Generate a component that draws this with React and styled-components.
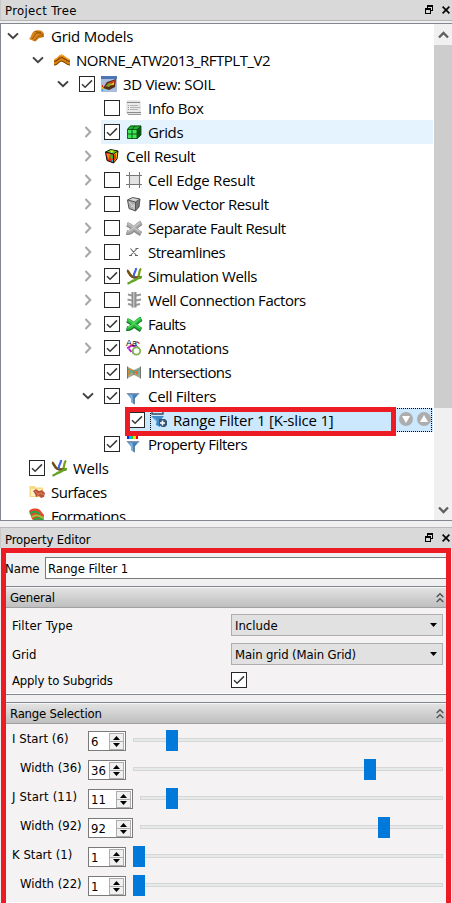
import React from 'react';
import styled, { createGlobalStyle, css } from 'styled-components';

const Global = createGlobalStyle`
  *, *::before, *::after { box-sizing: border-box; }
  body { margin: 0; background: #f0f0f0; }
`;

const Window = styled.main`
  width: 452px;
  height: 903px;
  overflow: hidden;
  display: flex;
  flex-direction: column;
  background: #f0f0f0;
  color: #000;
  font: 13px "DejaVu Sans Condensed", "DejaVu Sans", sans-serif;
  font-stretch: 75%;
`;

const Text = styled.span`
  white-space: pre;
  letter-spacing: ${(p) => p.$track || 0}px;
`;

/* ---------- dock title bars ---------- */

const DockTitle = styled.header`
  flex: none;
  height: 21px;
  display: flex;
  align-items: center;
  justify-content: space-between;
  padding: 0 2px 0 4px;
  background: #d9d9d9;
  border-left: 1px solid #c8c8c8;
  border-bottom: ${(p) => (p.$lower ? 0 : '1px solid #b4b4b4')};
  border-top: ${(p) => (p.$lower ? '1px solid #b9b9b9' : 0)};
`;

const DockLabel = styled(Text)`
  padding-top: ${(p) => (p.$lower ? 2 : 0)}px;
`;

const DockButtons = styled.div`
  display: flex;
  align-items: center;
  gap: 9px;
  margin-top: -1px;
`;

/* ---------- tree ---------- */

const TreeFrame = styled.section`
  flex: none;
  margin-top: 2px;
  height: 498px;
  display: flex;
  border: 1px solid #828790;
  border-right: 0;
  background: #fff;
`;

const TreeList = styled.div`
  width: 432px;
  overflow: hidden;
`;

const TreeRow = styled.div`
  height: 24px;
  display: flex;
  padding-left: ${(p) => Math.max(0, p.$level * 25 - 1)}px;
`;

const Expander = styled.div`
  flex: none;
  width: ${(p) => (p.$level === 0 ? 25 : 26)}px;
  height: 24px;
  padding-right: ${(p) => (p.$level === 0 ? 2 : 1)}px;
  display: flex;
  align-items: center;
  justify-content: center;
`;

const RowContent = styled.div`
  position: relative;
  flex: 1;
  display: flex;
  align-items: center;
  gap: 6px;
  padding: 0 2px 0 3px;
  ${(p) => p.$state === 'hover' && css`background: #e5f3ff;`}
  ${(p) => p.$state === 'selected' && css`background: #cce8ff;`}
`;

const RowLabel = styled(Text)`
  font: 15px/24px "Open Sans", "Noto Sans", sans-serif;
`;

const IconSlot = styled.svg`
  flex: none;
  width: 16px;
  height: 16px;
  overflow: visible;
`;

const Box = styled.span`
  flex: none;
  width: 16px;
  height: 16px;
  display: flex;
  align-items: center;
  justify-content: center;
  border: 1px solid #262626;
  background: #fff;
`;

const FocusOutline = styled.div`
  position: absolute;
  inset: 0 1px 0 24px;
  border: 1px dotted #000;
`;

const RowHighlight = styled.div`
  position: absolute;
  left: -1px;
  top: -1px;
  width: 271px;
  height: 29px;
  border: 5px solid #ed1c24;
  z-index: 1;
`;

const MoveButtons = styled.div`
  margin-left: auto;
  display: flex;
  gap: 4px;
  margin-top: -2px;
`;

const ScrollBar = styled.div`
  margin-left: 1px;
  width: 18px;
  display: flex;
  flex-direction: column;
  background: #f0f0f0;
`;

const ScrollButton = styled.div`
  height: 21px;
  display: flex;
  align-items: center;
  justify-content: center;
  padding-left: 1px;
`;

const ScrollThumb = styled.div`
  height: 363px;
  background: #cdcdcd;
`;

const ScrollTrack = styled.div`
  flex: 1;
`;

/* ---------- property editor ---------- */

const Editor = styled.section`
  position: relative;
  flex: none;
  margin-top: 6px;
  height: 376px;
`;

const EditorFrame = styled.div`
  position: absolute;
  left: 1px;
  top: 21px;
  width: 450px;
  height: 370px;
  border: 5px solid #ed1c24;
`;

const NameRow = styled.div`
  display: flex;
  align-items: center;
  margin-top: 9px;
  padding: 0 5px;
`;

const NameLabel = styled(Text)`
  width: 40px;
`;

const NameInput = styled.div`
  flex: 1;
  height: 22px;
  padding-left: 2px;
  border: 1px solid #7a7a7a;
  background: #fff;
  line-height: 21px;
`;

const Group = styled.div`
  margin: 7px 6px 0 6px;
  height: ${(p) => p.$height}px;
  border-top: 1px solid #828790;
  border-bottom: 1px solid #828790;
  background: #f4f2f3;
  box-shadow: inset 0 -1px #fff;
`;

const GroupHeader = styled.div`
  height: 21px;
  display: flex;
  align-items: center;
  justify-content: space-between;
  padding: 0 2px 0 4px;
  border-top: 1px solid #f4f4f4;
  border-bottom: 1px solid #a0a0a0;
  background: linear-gradient(#e2e2e2, #bfbfbf);
`;

const Field = styled.div`
  display: grid;
  grid-template-columns: 219px 212px;
  align-items: center;
  padding-left: 6px;
  height: ${(p) => p.$height}px;
`;

const FieldGrid = styled.div`
  padding-top: 3px;
`;

const Combo = styled.div`
  height: 22px;
  margin-bottom: 1px;
  display: flex;
  align-items: center;
  justify-content: space-between;
  padding: 0 5px 0 3px;
  border: 1px solid #adadad;
  background: #e1e1e1;
`;

const RangeList = styled.div`
  padding-top: 2px;
`;

const RangeRow = styled.div`
  display: flex;
  align-items: center;
  height: 29px;
  padding: 1px 3px 0 6px;
`;

const RangeLabel = styled(Text)`
  width: 76px;
  padding-left: ${(p) => (p.$inset ? 8 : 0)}px;
  margin-top: -5px;
`;

const Spin = styled.div`
  flex: none;
  width: ${(p) => (p.$wide ? 45 : 38)}px;
  height: 20px;
  display: flex;
  justify-content: space-between;
  padding: 1px 1px 1px 2px;
  border: 1px solid #7a7a7a;
  background: #fff;
  line-height: 18px;
`;

const SpinArrows = styled.div`
  width: 15px;
  height: 17px;
  display: grid;
  grid-template-rows: 1fr 1fr;
  place-items: center;
  border: 1px solid #adadad;
  background: linear-gradient(#adadad, #adadad) center / 100% 1px no-repeat #f0f0f0;
`;

const Slider = styled.div`
  flex: 1;
  margin: -1px 0 0 7px;
  height: 21px;
  padding-top: 8px;
`;

const Groove = styled.div`
  position: relative;
  width: 100%;
  height: 4px;
  border: 1px solid #d6d6d6;
  background: #e7eaea;
`;

const Handle = styled.div`
  position: absolute;
  top: -9px;
  left: ${(p) => p.$at - 1}px;
  width: 12px;
  height: 21px;
  background: #0079da;
`;

/* ---------- small drawings ---------- */

const Check = ({ on }) => (
  <Box>
    {on && (
      <svg width="14" height="14" viewBox="0 0 14 14">
        <path d="M2 7.2 5.1 10.3 12 3.4" fill="none" stroke="#3a3a3a" strokeWidth="1.5" />
      </svg>
    )}
  </Box>
);

const RestoreIcon = () => (
  <svg width="8" height="9" viewBox="0 0 8 9" shapeRendering="crispEdges">
    <path d="M2 0h6v6H6v3H0V3h2zM3 2v1h3v2h1V2zM1 5v3h4V5z" fill="#000" fillRule="evenodd" />
  </svg>
);
const CloseIcon = () => (
  <svg width="8" height="8" viewBox="0 0 8 8">
    <path d="M.6.6l6.8 6.8M7.4.6.6 7.4" stroke="#000" strokeWidth="1.6" />
  </svg>
);
const DownChevron = () => (
  <svg width="12" height="8" viewBox="0 0 12 8">
    <path d="M1 1.4 6 6.2 11 1.4" fill="none" stroke="#404040" strokeWidth="2" />
  </svg>
);
const RightChevron = () => (
  <svg width="8" height="12" viewBox="0 0 8 12">
    <path d="M1.5 1 6.3 6 1.5 11" fill="none" stroke="#a6a6a6" strokeWidth="2" />
  </svg>
);
const ScrollChevron = ({ up }) => (
  <svg width="11" height="8" viewBox="0 0 11 8">
    <path d={up ? 'M1 6.5 5.5 2 10 6.5' : 'M1 1.5 5.5 6 10 1.5'} fill="none" stroke="#606060" strokeWidth="2.3" />
  </svg>
);
const CollapseIcon = () => (
  <svg width="8" height="12" viewBox="0 0 8 12">
    <path d="M.7 5 4 1.7 7.3 5M.7 10 4 6.7 7.3 10" fill="none" stroke="#555" strokeWidth="1.5" />
  </svg>
);
const Caret = ({ up }) => (
  <svg width="7" height="4" viewBox="0 0 7 4">
    <path d={up ? 'M0 4 3.5 0 7 4z' : 'M0 0h7L3.5 4z'} fill="#000" />
  </svg>
);
const MoveIcon = ({ up }) => (
  <svg width="14" height="14" viewBox="0 0 14 14">
    <circle cx="7" cy="7" r="7" fill="#adadad" />
    <path d={up ? 'M7 3 11 10H3z' : 'M3 4h8L7 11z'} fill="#fff" />
  </svg>
);

const funnel = (
  <g transform="translate(-1 2)">
    <path d="M1.500 3h13L9.800 8.500v6L6 12V8.500z" fill="#3f7fc1" />
    <path d="M1.500 3h13l-1.200 1.600H2.800z" fill="#8496ab" />
    <path d="M6 8.500 3.500 5h4l.8 8.500L6 12z" fill="#79b1e0" />
    <path d="M8.300 8.500h1.500v6l-1.500-1z" fill="#6b7c93" />
  </g>
);

const wells = (
  <g fill="none">
    <path d="M15 .5C12.500 3 14 6 12 9" stroke="#7aa01a" strokeWidth="2.200" />
    <path d="M1 2.500C3 3 3 7 6 8.500S10 9.500 15 9.500" stroke="#72520f" strokeWidth="2.600" />
    <path d="M10 0C10.500 3.500 7 4.500 8 9" stroke="#4063e8" strokeWidth="2.200" />
    <path d="M16 9C12 9 11 12 8 12.500S5 15 1.500 15.500" stroke="#61a523" strokeWidth="2.300" />
  </g>
);

const faults = (light, mid, dark) => (
  <g fill="none">
    <path d="M.5 12.500C6 14 9 6 15.500 3M1 4.500C6 6 9 11 15 14" stroke={dark} strokeWidth="4.600" />
    <path d="M1 12C6 13 9 5 15 2.500M1.300 4C6 5.500 9 10 15 13" stroke={mid} strokeWidth="3.600" />
    <path d="M2 11C6 11 9 5 14 2.500M2 3.500C6 5.500 9 9 14 11.500" stroke={light} strokeWidth="1.100" />
  </g>
);

const cube = (top, left, right, line) => (
  <>
    <path d="M1.500 4 6.500 1.500 14 3 9.500 6z" fill={top} />
    <path d="M1.500 4 9.500 6v9L3 12.500z" fill={left} />
    <path d="M9.500 6 14 3l-1 8-3.500 4z" fill={right} />
    <path d="M1.500 4 6.500 1.500 14 3l-1 8-3.500 4L3 12.500zL9.500 6 14 3M9.500 6v9" fill="none" stroke={line} strokeLinejoin="round" />
  </>
);

const icons = {
  models: (
    <>
      <path d="M0 11C3 9 2 3 7 2.500s6 0 8 3V9l-4 1c-2 0-3 3-5 3.500z" fill="#d98318" />
      <path d="M3 11C6 9 5 5.500 8 5s4 1 6 2M5 12.500c3-1 3-4 5-4.500s3 0 4.500 .5M6 3.500l6 1" fill="none" stroke="#8f5208" strokeWidth=".9" />
    </>
  ),
  layers: (
    <>
      <path d="M0 7C4 7 4 2.500 7.500 2.500S12 7 16 7v6.500c-4 0-5-4-8.500-4S4 13.500 0 13.500z" fill="#dd830f" />
      <path d="M0 9.500C4 9.500 4.500 5.500 7.500 5.500S12 9.500 16 9.500M0 13c4 0 5-4 7.500-4s4.500 4 8.500 4" fill="none" stroke="#804706" strokeWidth="1.200" />
      <path d="M0 7.700C4 7.700 4 3.200 7.500 3.200S12 7.700 16 7.700" fill="none" stroke="#ffad31" />
    </>
  ),
  view: (
    <>
      <path d="M0 0h16v16H0z" fill="#a9bddd" />
      <path d="M0 0h16v3H0z" fill="#4d75b3" />
      <path d="M2 12 6 6l9-3-1 8-6 3z" fill="#503018" />
      <path d="M4 11 7 7l7-3-1 5z" fill="#d5361b" />
      <path d="M5 10l3-3 3 1-3 3z" fill="#78ac24" />
      <path d="M9 9l4-3v3z" fill="#e8bd22" />
      <path d="M1.500 9v2" stroke="#e52020" />
      <path d="M1.500 11v2" stroke="#e9d318" />
      <path d="M1.500 13v2" stroke="#2ba7d6" />
    </>
  ),
  info: (
    <>
      <path d="M1 1h13v13H1z" fill="#ececec" stroke="#d8d8d8" />
      <path d="M1 2.500h13M1 12.500h14" stroke="#8c8c8c" />
      <path d="M4 5.500h8M4 7.500h10M4 9.500h8" stroke="#b2b2b2" />
      <path d="M2 5.500h1M2 7.500h1M2 9.500h1M2 14.500h13" stroke="#999" />
    </>
  ),
  grids: (
    <>
      <path d="M1 5 4.500 1.500h10.500L11 5z" fill="#22b535" />
      <path d="M1 5h10v10H1z" fill="#3fe656" />
      <path d="M11 5l4-3.500V11l-4 4z" fill="#116c1b" />
      <path d="M1.500 5.500h9.500v9H1.500zM6 5.500v9M1.500 10H11L15 7M6 5.500 9 2M11 5.500 15 2v9l-4 3.500M13 4v9M1.500 5.500 4.500 2H15" fill="none" stroke="#06400d" strokeWidth=".8" />
    </>
  ),
  cell: (
    <>
      {cube('#55cf29', '#ed251d', '#ffca00', '#111')}
      <path d="M2.500 5.500 6 6l-1.500 6z" fill="#ff8a00" />
      <path d="M6 2.500h4L7.500 5z" fill="#ffe900" />
      <path d="M6 6.500l3 .7v3L7 12z" fill="#34bb25" />
      <path d="M10 7l2-1.500V11l-2 2z" fill="#f03b00" />
      <path d="M7.500 12.500l1.500-1v2.800z" fill="#1ac5e5" />
    </>
  ),
  edge: (
    <>
      <path d="M4 4h9v9H4z" fill="#e3e3e3" />
      <path d="M3.500 0v16M13.500 0v16M0 3.500h16M0 12.500h16" stroke="#777" strokeWidth="1.100" />
    </>
  ),
  flow: (
    <>
      {cube('#cfcfcf', '#aaa', '#777', '#555')}
      <path d="M3 6l4 4-2 1M6 3l4 1M8 8v5" fill="none" stroke="#ddd" />
    </>
  ),
  separate: faults('#c9c9c9', '#a9a9a9', '#8b8b8b'),
  stream: <path d="M4.500 4.500 10.500 11.500M11 4.500 4.500 11.500M9.500 4.500h3M3 11.500h3M9 11.500h3" fill="none" stroke="#666" strokeWidth="1.100" />,
  wells,
  connection: (
    <>
      <path d="M2 2.500l4 1M1.500 7.500l4.500 1M2 12l4 1M10 3.500l5-1M10 8.500l5-1M10 13l4-1" stroke="#999" strokeWidth="2" />
      <path d="M5.500 0h5v15.500h-5z" fill="#909090" />
      <path d="M7 0h1.500v15H7z" fill="#c0c0c0" />
    </>
  ),
  faults: faults('#59dc64', '#28b93a', '#157829'),
  annotations: (
    <>
      <path d="M2 8 5.500 5.500 11 7 9 12l-3 .5z" fill="none" stroke="#bc20cf" strokeWidth="2" strokeDasharray="4 .8" />
      <path d="M10.500 1.500l3 2" stroke="#d52525" strokeWidth="1.400" />
      <circle cx="10.500" cy="11" r="3.700" fill="#fff" stroke="#7cb54a" strokeWidth="1.800" />
      <text x="0" y="6" fontSize="9" fontFamily="Liberation Sans, sans-serif" fill="#000">Aa</text>
    </>
  ),
  intersections: (
    <>
      <path d="M1 2.500 8 6l7-3.500v12L8 11l-7 3.500z" fill="#a3a78d" />
      <path d="M1.500 3.500 7.500 6.500 2 12z" fill="#f08428" />
      <path d="M2 5l3 2.500L2.500 10M5 6l2.500 3" fill="none" stroke="#4fae93" strokeWidth="1.300" />
      <path d="M8.500 7l5.500-3-3 7.500z" fill="#f4661c" />
      <path d="M10 7l3-2.500-.5 6" fill="none" stroke="#55bcb8" />
      <path d="M1.500 2.500v12M14.500 2.500v12M8 6v5" fill="none" stroke="#77736c" />
    </>
  ),
  filter: funnel,
  range: (
    <>
      <path d="M1 0v2h11V0" fill="none" stroke="#3b485a" strokeWidth="1.300" />
      <path d="M0 4h13L9 9v6l-4-2V9z" fill="#428bc8" />
      <path d="M3 5l3 7V9" fill="#8bc0e8" />
      <path d="M8 7h6l2 2v4l-2 2h-3l-3-2z" fill="#34567e" />
      <path d="M11.500 8.500v5M9 11h5" stroke="#fff" strokeWidth="1.600" />
    </>
  ),
  property: (
    <>
      {funnel}
      <path d="M1 0h2v3H1z" fill="#002de3" />
      <path d="M3 0h2v3H3z" fill="#00c5e9" />
      <path d="M5 0h2.500v3H5z" fill="#27cb36" />
      <path d="M7.500 0h2.500v3H7.500z" fill="#ffe100" />
      <path d="M10 0h2v3h-2z" fill="#f20000" />
    </>
  ),
  surfaces: (
    <>
      <path d="M.5 2h5L7 3.500h7V13H.5z" fill="#f7d982" />
      <path d="M2 5h11v7H2z" fill="#fff1c3" />
      <path d="M4 7l3-2 3 2 3-1 3 3-1 4-3 1-2-2-3 1-1-3z" fill="#bc5639" />
      <path d="M6 7l3 3 4-1M8 12l3-3 4 2" fill="none" stroke="#d97d5a" />
    </>
  ),
  formations: (
    <>
      <path d="M0 3c3-3 8-3 11-1l4 5-1 9H8L3 11z" fill="#e54a31" />
      <path d="M1 6c3-4 7-2 10 0M5 12c4-3 6-2 10 1" fill="none" stroke="#1dad43" strokeWidth="2" />
      <path d="M3 9c4-3 7-2 11 1" fill="none" stroke="#8cd438" strokeWidth="2" />
    </>
  ),
};

/* ---------- data ---------- */

const tree = [
  { level: 0, label: 'Grid Models', icon: 'models', open: true, track: -0.25 },
  { level: 1, label: 'NORNE_ATW2013_RFTPLT_V2', icon: 'layers', open: true, track: -0.49 },
  { level: 2, label: '3D View: SOIL', icon: 'view', open: true, checked: true, track: -0.3 },
  { level: 3, label: 'Info Box', icon: 'info', checked: false, track: -0.3 },
  { level: 3, label: 'Grids', icon: 'grids', open: false, checked: true, state: 'hover', track: -0.4 },
  { level: 3, label: 'Cell Result', icon: 'cell', open: false, track: -0.28 },
  { level: 3, label: 'Cell Edge Result', icon: 'edge', open: false, checked: false, track: -0.22 },
  { level: 3, label: 'Flow Vector Result', icon: 'flow', open: false, checked: false, track: -0.42 },
  { level: 3, label: 'Separate Fault Result', icon: 'separate', open: false, checked: false, track: -0.48 },
  { level: 3, label: 'Streamlines', icon: 'stream', open: false, checked: false, track: -0.5 },
  { level: 3, label: 'Simulation Wells', icon: 'wells', open: false, checked: true, track: -0.4 },
  { level: 3, label: 'Well Connection Factors', icon: 'connection', open: false, checked: false, track: -0.46 },
  { level: 3, label: 'Faults', icon: 'faults', open: false, checked: true, track: -0.68 },
  { level: 3, label: 'Annotations', icon: 'annotations', open: false, checked: true, track: -0.42 },
  { level: 3, label: 'Intersections', icon: 'intersections', checked: true, track: -0.58 },
  { level: 3, label: 'Cell Filters', icon: 'filter', open: true, checked: true, track: -0.3 },
  { level: 4, label: 'Range Filter 1 [K-slice 1]', icon: 'range', checked: true, state: 'selected', track: -0.19 },
  { level: 3, label: 'Property Filters', icon: 'property', checked: true, track: -0.5 },
  { level: 0, label: 'Wells', icon: 'wells', checked: true, track: -0.3 },
  { level: 0, label: 'Surfaces', icon: 'surfaces', track: -0.52 },
  { level: 0, label: 'Formations', icon: 'formations', track: -0.5 },
];

const ranges = [
  { label: 'I Start (6)', value: 6, at: 33, track: 0.05 },
  { label: 'Width (36)', value: 36, at: 231, inset: true },
  { label: 'J Start (11)', value: 11, at: 26, wide: true, track: 0.15 },
  { label: 'Width (92)', value: 92, at: 238, wide: true, inset: true },
  { label: 'K Start (1)', value: 1, at: 0 },
  { label: 'Width (22)', value: 1, at: 0, inset: true },
];

/* ---------- composition ---------- */

const Dock = ({ title, lower, track }) => (
  <DockTitle $lower={lower}>
    <DockLabel $lower={lower} $track={track}>{title}</DockLabel>
    <DockButtons>
      <RestoreIcon />
      <CloseIcon />
    </DockButtons>
  </DockTitle>
);

const TreeItem = ({ level, label, icon, open, checked, state, track }) => (
  <TreeRow $level={level}>
    <Expander $level={level}>
      {open === true && <DownChevron />}
      {open === false && <RightChevron />}
    </Expander>
    <RowContent $state={state}>
      {checked !== undefined && <Check on={checked} />}
      <IconSlot viewBox="0 0 16 16">{icons[icon]}</IconSlot>
      <RowLabel $track={track}>{label}</RowLabel>
      {state === 'selected' && (
        <>
          <MoveButtons>
            <MoveIcon />
            <MoveIcon up />
          </MoveButtons>
          <FocusOutline />
          <RowHighlight />
        </>
      )}
    </RowContent>
  </TreeRow>
);

const Header = ({ title, track }) => (
  <GroupHeader>
    <Text $track={track}>{title}</Text>
    <CollapseIcon />
  </GroupHeader>
);

export default function App() {
  return (
    <Window>
      <Global />
      <Dock title="Project Tree" track={0.33} />
      <TreeFrame>
        <TreeList>
          {tree.map((item) => (
            <TreeItem key={item.level + item.label} {...item} />
          ))}
        </TreeList>
        <ScrollBar>
          <ScrollButton><ScrollChevron up /></ScrollButton>
          <ScrollThumb />
          <ScrollTrack />
          <ScrollButton><ScrollChevron /></ScrollButton>
        </ScrollBar>
      </TreeFrame>

      <Editor>
        <Dock title="Property Editor" lower track={-0.15} />
        <NameRow>
          <NameLabel>Name</NameLabel>
          <NameInput><Text $track={-0.04}>Range Filter 1</Text></NameInput>
        </NameRow>
        <Group $height={109}>
          <Header title="General" track={-0.2} />
          <FieldGrid>
            <Field $height={29}>
              <Text $track={0.15}>Filter Type</Text>
              <Combo>Include<Caret /></Combo>
            </Field>
            <Field $height={29}>
              <Text>Grid</Text>
              <Combo><Text $track={-0.12}>Main grid (Main Grid)</Text><Caret /></Combo>
            </Field>
            <Field $height={22}>
              <Text $track={-0.16}>Apply to Subgrids</Text>
              <Check on />
            </Field>
          </FieldGrid>
        </Group>
        <Group $height={202}>
          <Header title="Range Selection" track={-0.2} />
          <RangeList>
            {ranges.map((r) => (
              <RangeRow key={r.label}>
                <RangeLabel $inset={r.inset} $track={r.track}>{r.label}</RangeLabel>
                <Spin $wide={r.wide}>
                  {r.value}
                  <SpinArrows>
                    <Caret up />
                    <Caret />
                  </SpinArrows>
                </Spin>
                <Slider>
                  <Groove>
                    <Handle $at={r.at} />
                  </Groove>
                </Slider>
              </RangeRow>
            ))}
          </RangeList>
        </Group>
        <EditorFrame />
      </Editor>
    </Window>
  );
}
